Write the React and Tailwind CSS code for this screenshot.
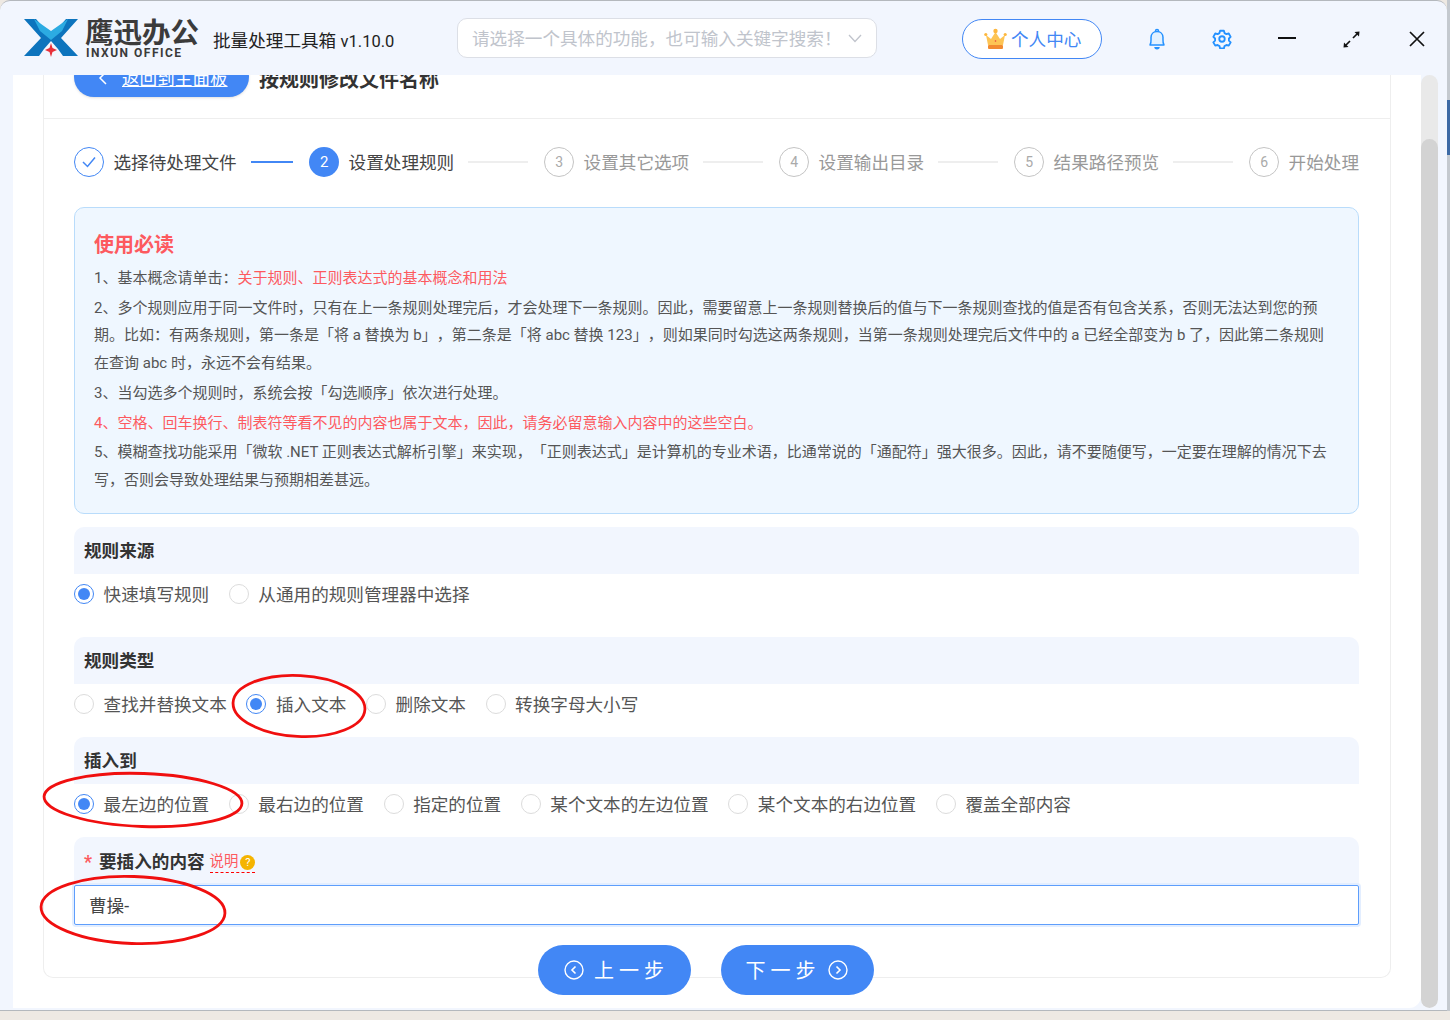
import React from 'react'

function Logo() {
  return (
    <svg width="54" height="38" viewBox="0 0 54 38" className="shrink-0">
      <path d="M0 37 L17 19 L0 0 L12 0 L27 17 L27 22 L20 30 L15 37 Z" fill="#0d74bd" />
      <path d="M54 37 L37 19 L54 0 L42 0 L27 17 L27 22 L34 30 L39 37 Z" fill="#0d74bd" />
      <path d="M10 0 L27 12 L44 0 L38 12 L27 21 L16 12 Z" fill="#2cabe2" />
      <path d="M27 24 L28.5 29 L33 31 L28.5 33 L27 38 L25.5 33 L21 31 L25.5 29 Z" fill="#e8303a" />
    </svg>
  )
}

function Crown() {
  return (
    <svg width="23" height="22" viewBox="0 0 23 22" className="shrink-0">
      <path d="M2 7 L7 11 L11.5 4 L16 11 L21 7 L19 17 H4 Z" fill="#fdc454" />
      <rect x="4" y="17" width="15" height="4" rx="1" fill="#f28a30" />
      <circle cx="11.5" cy="3" r="2.2" fill="#fdb73e" />
      <circle cx="1.8" cy="6.5" r="1.6" fill="#fdb73e" />
      <circle cx="21.2" cy="6.5" r="1.6" fill="#fdb73e" />
      <circle cx="11.5" cy="13" r="0.8" fill="#e8403a" />
    </svg>
  )
}

function Header() {
  return (
    <div className="h-[74px] shrink-0 flex items-center pl-6 text-[17.6px]">
      <Logo />
      <div className="ml-[7px] flex flex-col w-[120px] -mt-[1px]">
        <div className="text-[28.5px] pt-[4px] leading-[26px] font-bold text-[#3b3b3b] whitespace-nowrap">鹰迅办公</div>
        <div className="text-[12px] leading-[12px] font-bold tracking-[1.5px] text-[#3b3b3b] whitespace-nowrap pl-[1px]">INXUN OFFICE</div>
      </div>
      <div className="ml-[8px] mt-[6px] w-[244px] whitespace-nowrap text-[#222]">批量处理工具箱 <span className="text-[16.5px]">v1.10.0</span></div>
      <div className="w-[420px] h-10 bg-white border border-[#dcdfe6] rounded-[10px] flex items-center pl-[14px] pr-[14px] text-[#c0c4cc]">
        <span className="flex-1 whitespace-nowrap pt-[2px]">请选择一个具体的功能&#xFF0C;也可输入关键字搜索&#xFF01;</span>
        <svg width="14" height="14" viewBox="0 0 14 14" fill="none" stroke="#c0c4cc" strokeWidth="1.3"><path d="M1 4 L7 10.5 L13 4" /></svg>
      </div>
      <div className="ml-[85px] mt-[2px] w-[140px] h-10 bg-white border border-[#4287f5] rounded-full flex items-center pl-[21px] gap-[4px] text-[#4287f5]">
        <Crown />
        <span className="whitespace-nowrap pt-[2px]">个人中心</span>
      </div>
      <svg className="ml-[45px] mt-[2px]" width="20" height="22" viewBox="0 0 20 22" fill="#e2f1ff" stroke="#2491ff" strokeWidth="1.5">
        <path d="M3 17 C4.5 15 4 12 4 9.5 C4 6 6.5 3.5 10 3.5 C13.5 3.5 16 6 16 9.5 C16 12 15.5 15 17 17 Z" strokeLinejoin="round" />
        <path d="M8.5 3 a1.5 1.5 0 0 1 3 0" />
        <path d="M8 19 a2 1.7 0 0 0 4 0" fill="#2491ff" />
      </svg>
      <svg className="ml-[45px] mt-[2px]" width="20" height="20" viewBox="0 0 24 24" fill="none" stroke="#2491ff" strokeWidth="2.2" strokeLinejoin="round">
        <path d="M9.7 2.5 h4.6 l.7 2.8 2.3 1.3 2.8-.8 2.3 4-2.1 2 v2.6 l2.1 2-2.3 4-2.8-.8-2.3 1.3-.7 2.8 h-4.6 l-.7-2.8-2.3-1.3-2.8.8-2.3-4 2.1-2 v-2.6 l-2.1-2 2.3-4 2.8.8 2.3-1.3 z" transform="translate(0 -0.4)" />
        <circle cx="12" cy="12" r="3.3" />
      </svg>
      <div className="ml-[46px] w-[18px] h-[2px] bg-[#111]" />
      <svg className="ml-[47px] mt-[2px]" width="17" height="17" viewBox="0 0 17 17" stroke="#111" strokeWidth="1.7" fill="#111">
        <path d="M3 14 L7 10 M10 7 L14 3" />
        <path d="M0.5 16.5 L1 11.5 L5.5 16 Z M16.5 0.5 L16 5.5 L11.5 1 Z" strokeWidth="0" />
      </svg>
      <svg className="ml-[49px] mt-[2px]" width="16" height="16" viewBox="0 0 16 16" stroke="#111" strokeWidth="1.7"><path d="M1 1 L15 15 M15 1 L1 15" /></svg>
    </div>
  )
}

function Step({ num, label, state, line }) {
  return (
    <>
      {state === 'done' && (
        <div className="w-[30px] h-[30px] shrink-0 rounded-full border border-[#4287f5] flex items-center justify-center">
          <svg width="16" height="14" viewBox="0 0 16 14" fill="none" stroke="#4287f5" strokeWidth="1.5"><path d="M2 7 L6.5 11.5 L14 2.5" /></svg>
        </div>
      )}
      {state === 'active' && (
        <div className="w-[30px] h-[30px] shrink-0 rounded-full bg-[#4287f5] text-white flex items-center justify-center text-[15px]">{num}</div>
      )}
      {state === 'todo' && (
        <div className="w-[30px] h-[30px] shrink-0 rounded-full border border-[#c4c4c4] text-[#aaa] flex items-center justify-center text-[14px]">{num}</div>
      )}
      <div className={"ml-[9.5px] pt-[2px] whitespace-nowrap " + (state === 'todo' ? "text-[#999]" : "text-[#444]")}>{label}</div>
      {line && (
        <div className={"ml-[14px] mr-[16px] " + (state === 'done' ? "w-[42.5px] h-[2px] bg-[#4287f5]" : "w-[60px] h-[2px] bg-[#eee]")} />
      )}
    </>
  )
}

function Radio({ label, checked }) {
  return (
    <label className="flex items-center gap-[9.6px] mr-[19.6px]">
      <span className={"w-5 h-5 rounded-full bg-white flex items-center justify-center border " + (checked ? "border-[#4287f5]" : "border-[#dcdcdc]")}>
        {checked && <span className="w-3 h-3 rounded-full bg-[#4287f5]" />}
      </span>
      <span className="whitespace-nowrap pt-[2px]">{label}</span>
    </label>
  )
}

function Section({ title, options, checked, className }) {
  return (
    <div className={className}>
      <div className="h-[47px] pt-[2px] bg-[#f2f6fe] rounded-t-[10px] flex items-center px-[10px] font-bold text-[#333]">{title}</div>
      <div className="h-[40px] flex items-center text-[#555]">
        {options.map((o) => <Radio key={o} label={o} checked={o === checked} />)}
      </div>
    </div>
  )
}

function Notice() {
  return (
    <div className="mt-[30px] h-[307px] bg-[#eff7ff] border border-[#b9dcfb] rounded-[10px] pt-[22px] pl-[19px] text-[15px] leading-[27.4px] text-[#555] whitespace-nowrap [text-spacing-trim:space-all]">
      <div className="text-[20px] leading-[30px] font-bold text-[#fd5a5f] mb-[5px]">使用必读</div>
      <p>1、基本概念请单击&#xFF1A;<span className="text-[#fd5a5f]">关于规则、正则表达式的基本概念和用法</span></p>
      <p className="mt-[2.5px]">
        2、多个规则应用于同一文件时&#xFF0C;只有在上一条规则处理完后&#xFF0C;才会处理下一条规则。因此&#xFF0C;需要留意上一条规则替换后的值与下一条规则查找的值是否有包含关系&#xFF0C;否则无法达到您的预<br />
        期。比如&#xFF1A;有两条规则&#xFF0C;第一条是「将 a 替换为 b」&#xFF0C;第二条是「将 abc 替换 123」&#xFF0C;则如果同时勾选这两条规则&#xFF0C;当第一条规则处理完后文件中的 a 已经全部变为 b 了&#xFF0C;因此第二条规则<br />
        在查询 abc 时&#xFF0C;永远不会有结果。
      </p>
      <p className="mt-[2.5px]">3、当勾选多个规则时&#xFF0C;系统会按「勾选顺序」依次进行处理。</p>
      <p className="mt-[2.5px] text-[#fd5a5f]">4、空格、回车换行、制表符等看不见的内容也属于文本&#xFF0C;因此&#xFF0C;请务必留意输入内容中的这些空白。</p>
      <p className="mt-[2.5px]">
        5、模糊查找功能采用「微软 .NET 正则表达式解析引擎」来实现&#xFF0C;「正则表达式」是计算机的专业术语&#xFF0C;比通常说的「通配符」强大很多。因此&#xFF0C;请不要随便写&#xFF0C;一定要在理解的情况下去<br />
        写&#xFF0C;否则会导致处理结果与预期相差甚远。
      </p>
    </div>
  )
}

function Annotations() {
  return (
    <>
      <svg className="absolute left-[228px] top-[671px]" width="144" height="70" fill="none" stroke="#f00f0f" strokeWidth="2.8"><ellipse cx="71" cy="35" rx="66" ry="30.5" transform="rotate(3 71 35)" /></svg>
      <svg className="absolute left-[40px] top-[768px]" width="208" height="64" fill="none" stroke="#f00f0f" strokeWidth="2.8"><ellipse cx="103" cy="32" rx="99" ry="26.5" transform="rotate(2 103 32)" /></svg>
      <svg className="absolute left-[36px] top-[871px]" width="194" height="78" fill="none" stroke="#f00f0f" strokeWidth="2.8"><ellipse cx="97" cy="39" rx="92" ry="33.5" transform="rotate(2 97 39)" /></svg>
    </>
  )
}

function StepBtn({ label, dir }) {
  const icon = (
    <svg width="20" height="20" viewBox="0 0 20 20" fill="none" stroke="#fff" strokeWidth="1.4" className="shrink-0">
      <circle cx="10" cy="10" r="9" />
      <path d={dir === 'prev' ? "M11.5 6.5 L8 10 L11.5 13.5" : "M8.5 6.5 L12 10 L8.5 13.5"} strokeWidth="1.6" />
    </svg>
  )
  return (
    <button className={"w-[153px] h-[50px] rounded-full bg-[#4287f5] text-white flex items-center justify-center text-[20px] tracking-[5px] " + (dir === 'prev' ? "gap-[10px] pl-[4px]" : "gap-[12px] pr-[2px]")}>
      {dir === 'prev' && icon}
      <span className={"whitespace-nowrap pt-[1px] " + (dir === 'next' ? "-mr-[5px]" : "")}>{label}</span>
      {dir === 'next' && icon}
    </button>
  )
}

export default function App() {
  return (
    <div className="relative w-[1450px] h-[1020px] overflow-hidden bg-[#eee9e3] font-['Roboto','Noto_Sans_CJK_SC',sans-serif] text-[17.6px]">
      <div className="absolute right-0 top-0 w-[3px] h-[1011px] bg-[#c4c9cf]" />
      <div className="absolute right-0 top-[100px] w-[3px] h-[55px] bg-[#3d6aa5]" />
      <div className="relative w-[1447px] h-[1011px] flex flex-col bg-[#f2f6fe] rounded-t-[10px] border-t border-b border-[#b4b8bd]">
        <Header />
        <div className="flex-1 min-h-0 flex pl-[13px] pb-[2px]">
          <div className="w-[1408px] bg-white rounded-br-[12px] overflow-hidden pl-[30px]">
            <div className="w-[1348px] h-[903px] border-x border-b border-[#eee] rounded-b-[10px]">
              <div className="h-[44px] border-b border-[#eee] flex items-end pb-[21px] px-[30px]">
                <div className="w-[175px] h-[40px] shrink-0 rounded-full bg-[#4287f5] text-white flex items-center pl-[24px] gap-[14px] shadow-sm">
                  <svg className="mt-[2px]" width="10" height="14" viewBox="0 0 10 14" fill="none" stroke="#fff" strokeWidth="1.5"><path d="M8 1 L2 7 L8 13" /></svg>
                  <span className="underline whitespace-nowrap pt-[4px]">返回到主面板</span>
                </div>
                <div className="ml-[10px] -mb-[3px] text-[20px] leading-[40px] font-bold text-[#333] whitespace-nowrap">按规则修改文件名称</div>
              </div>
              <div className="ml-[30px] mr-[31px]">
                <div className="mt-[28px] h-[30px] flex items-center">
                  <Step num="1" label="选择待处理文件" state="done" line />
                  <Step num="2" label="设置处理规则" state="active" line />
                  <Step num="3" label="设置其它选项" state="todo" line />
                  <Step num="4" label="设置输出目录" state="todo" line />
                  <Step num="5" label="结果路径预览" state="todo" line />
                  <Step num="6" label="开始处理" state="todo" />
                </div>
                <Notice />
                <Section className="mt-[13px]" title="规则来源" options={["快速填写规则", "从通用的规则管理器中选择"]} checked="快速填写规则" />
                <Section className="mt-[23px]" title="规则类型" options={["查找并替换文本", "插入文本", "删除文本", "转换字母大小写"]} checked="插入文本" />
                <Section className="mt-[13px]" title="插入到" options={["最左边的位置", "最右边的位置", "指定的位置", "某个文本的左边位置", "某个文本的右边位置", "覆盖全部内容"]} checked="最左边的位置" />
                <div className="mt-[13px]">
                  <div className="h-[48px] pt-[3px] bg-[#f2f6fe] rounded-t-[10px] flex items-center px-[10px]">
                    <span className="text-[#fd5a5f] font-bold mr-[7px]">*</span>
                    <span className="font-bold text-[#333]">要插入的内容</span>
                    <span className="ml-[5px] text-[14.4px] text-[#fd5a5f] border-b border-dashed border-[#f00] leading-[20px] flex items-center gap-[2px]">
                      说明
                      <span className="w-[15px] h-[15px] rounded-full bg-[#f5b400] text-white text-[11px] leading-[15px] text-center">?</span>
                    </span>
                  </div>
                  <div className="h-[40px] bg-white border border-[#5e9efc] rounded-[2px] shadow-[0_0_0_2px_#e3eeff] flex items-center pl-[14px] pt-[2px] text-[#444]">曹操-</div>
                </div>
                <div className="mt-[20px] pr-[21px] flex justify-center gap-[30px] relative z-10">
                  <StepBtn label="上一步" dir="prev" />
                  <StepBtn label="下一步" dir="next" />
                </div>
              </div>
            </div>
          </div>
          <div className="w-[17px] rounded-full bg-[#e9e9e9] overflow-hidden flex flex-col justify-end">
            <div className="h-[869px] rounded-full bg-[#d3d3d3]" />
          </div>
        </div>
      </div>
      <Annotations />
    </div>
  )
}
